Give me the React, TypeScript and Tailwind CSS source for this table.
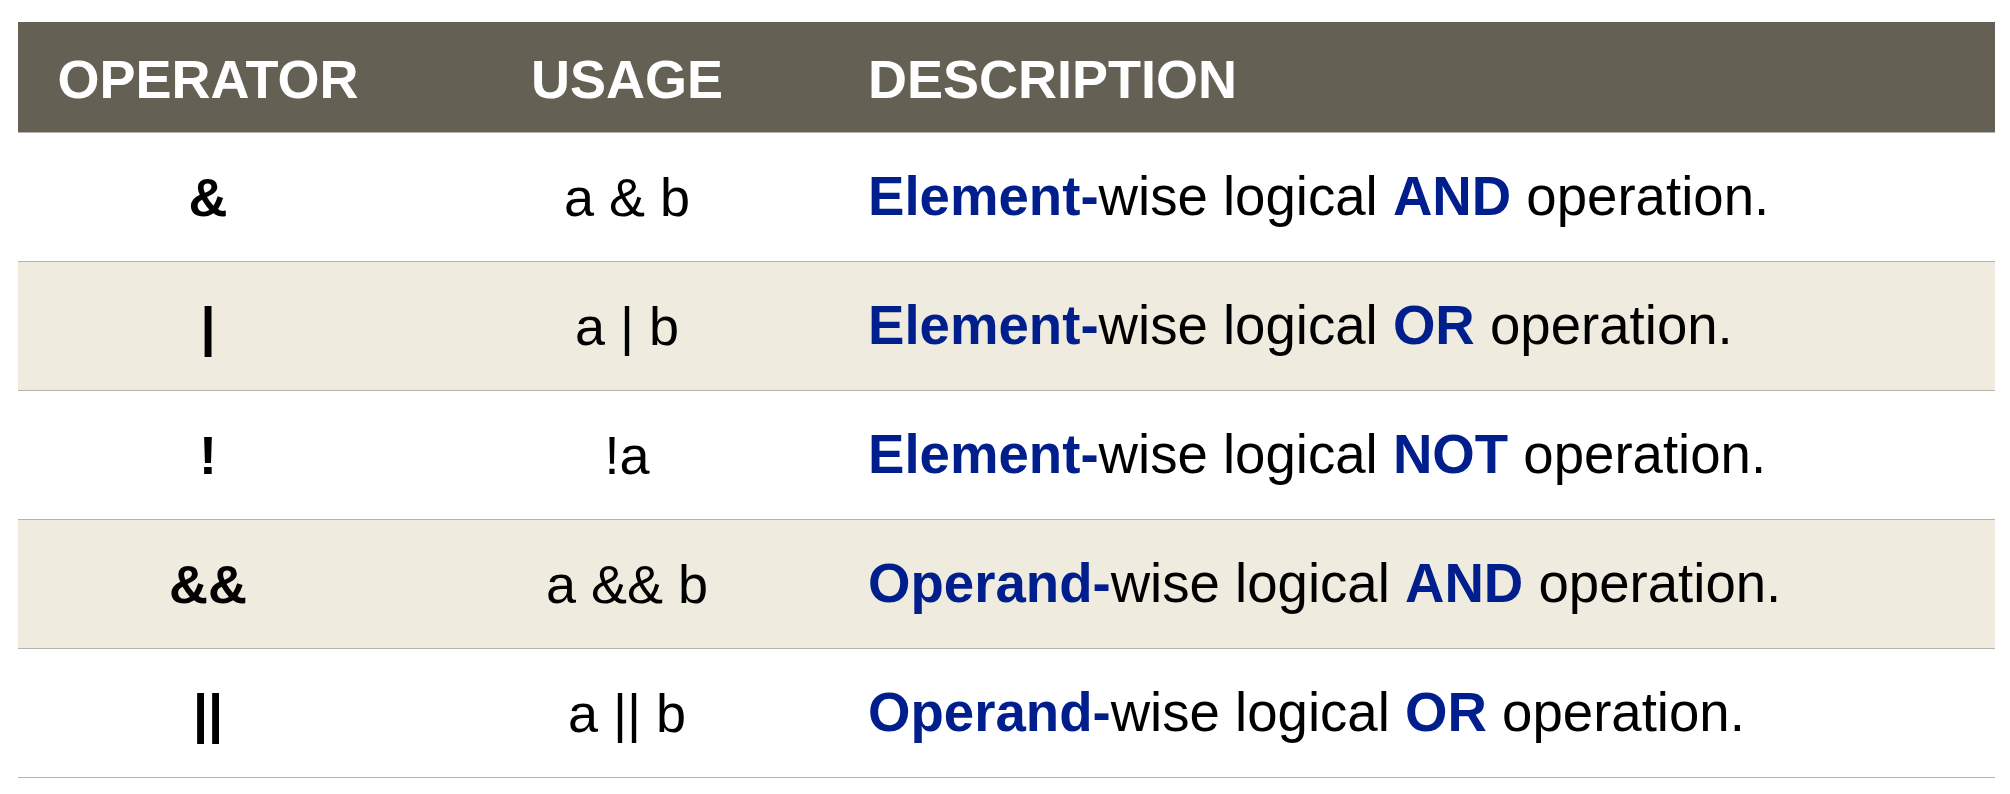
const rows = [
  { op: '&', usage: 'a & b', kind: 'Element', logic: 'AND' },
  { op: '|', usage: 'a | b', kind: 'Element', logic: 'OR' },
  { op: '!', usage: '!a', kind: 'Element', logic: 'NOT' },
  { op: '&&', usage: 'a && b', kind: 'Operand', logic: 'AND' },
  { op: '||', usage: 'a || b', kind: 'Operand', logic: 'OR' },
];

export default function App() {
  return (
    <div className="min-h-screen bg-white pt-[22px] px-[18px] font-['Liberation_Sans',Arial,sans-serif] text-[54px] leading-none text-black">
      <div className="w-[1977px]">
        <div className="flex h-[111px] items-center border-b border-[#b4b4ab] bg-[#646154] pt-[4px] font-bold text-white">
          <div className="w-[380px] text-center">OPERATOR</div>
          <div className="w-[458px] text-center">USAGE</div>
          <div className="flex-1 pl-[12px]">DESCRIPTION</div>
        </div>
        {rows.map((r, i) => (
          <div
            key={r.op}
            className={`flex h-[129px] items-center border-b border-[#b4b4ab] ${i % 2 === 1 ? 'bg-[#efecdf]' : 'bg-white'}`}
          >
            <div className="w-[380px] text-center font-bold">{r.op}</div>
            <div className="w-[458px] text-center">{r.usage}</div>
            <div className="flex-1 pl-[12px] text-[54.6px]">
              <span className="font-bold text-[#001e8c]">{r.kind}-</span>wise logical{' '}
              <span className="font-bold text-[#001e8c]">{r.logic}</span> operation.
            </div>
          </div>
        ))}
      </div>
    </div>
  );
}
